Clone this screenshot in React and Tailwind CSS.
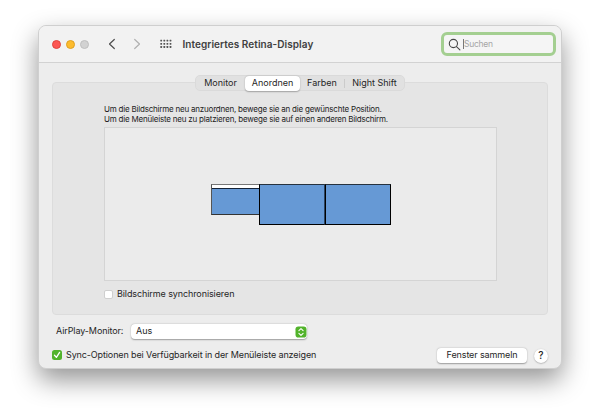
const T = ({ className = "", children }) => (
  <span className={"block whitespace-nowrap " + className}>{children}</span>
);

function TitleBar() {
  return (
    <header className="flex h-[37px] items-center border-b border-[#d2d2d2] bg-[#f2f2f2] pl-[13px] pr-[5px]">
      <div className="flex gap-[4.75px]">
        <i className="size-[9px] rounded-full border-[0.5px] border-[#e0443e] bg-[#fc5753]" />
        <i className="size-[9px] rounded-full border-[0.5px] border-[#dfa023] bg-[#fdbc2e]" />
        <i className="size-[9px] rounded-full border-[0.5px] border-[#bfbfbf] bg-[#d2d2d2]" />
      </div>
      <svg className="ml-[18.5px] h-[12px] w-[9px]" viewBox="0 0 9 12" fill="none" stroke="#4d4d4d" strokeWidth="1.2" strokeLinecap="round" strokeLinejoin="round">
        <path d="M7.3 1.5 2.5 6l4.8 4.5" />
      </svg>
      <svg className="ml-[16px] h-[12px] w-[9px]" viewBox="0 0 9 12" fill="none" stroke="#b0b0b0" strokeWidth="1.2" strokeLinecap="round" strokeLinejoin="round">
        <path d="M2.7 1.5 7.5 6l-4.8 4.5" />
      </svg>
      <svg className="ml-[18.5px] h-[10px] w-[12px]" viewBox="0 0 12 10" fill="#555">
        {[0, 1, 2, 3].map((c) =>
          [0, 1, 2].map((r) => (
            <rect key={`${c}-${r}`} x={0.3 + c * 3.1} y={0.7 + r * 3.2} width="1.8" height="1.8" rx="0.4" />
          ))
        )}
      </svg>
      <T className="ml-[11px] text-[10px] font-semibold leading-[12px] tracking-[0.06px] text-[#404040]">Integriertes Retina-Display</T>
      <div className="ml-auto flex h-[24px] w-[115px] items-center rounded-[6px] border-3 border-[#a4cf91] bg-[#f5f5f5] pl-[4px]">
        <svg className="size-[13px]" viewBox="0 0 13 13" fill="none" stroke="#484848" strokeWidth="1.1" strokeLinecap="round">
          <circle cx="5.4" cy="5.5" r="4.1" />
          <path d="m8.5 8.6 3.4 3.3" />
        </svg>
        <i className="ml-[2px] h-[10px] w-px bg-[#777]" />
        <T className="text-[8.5px] leading-[12px] tracking-[-0.25px] text-[#a6a6a6]">Suchen</T>
      </div>
    </header>
  );
}

function Tabs() {
  return (
    <div className="mx-auto -mt-[8px] flex h-[16px] w-[210px] items-center rounded-[5px] border border-[#dadada] bg-[#e1e1e1] text-center text-[9px] leading-[14px] text-[#262626]">
      <T className="w-[49px]">Monitor</T>
      <T className="-my-px h-[15px] w-[55px] rounded-[4px] bg-white leading-[14px] shadow-[0_0.5px_1.5px_rgba(0,0,0,0.3)]">Anordnen</T>
      <T className="w-[44px]">Farben</T>
      <i className="h-[9px] w-px bg-[#cbcbcb]" />
      <T className="w-[59px]">Night Shift</T>
    </div>
  );
}

function Displays() {
  return (
    <div className="flex h-[154px] w-[393px] items-start border border-[#d4d4d4] bg-[#ebebeb] pl-[106px] pt-[56px]">
      <div className="h-[31px] w-[48px] border border-r-0 border-[#333] border-l-[#555] border-t-[#777] bg-[#6699d5]">
        <div className="h-[4px] border-b border-[#142236] bg-white" />
      </div>
      <div className="h-[41px] w-[66px] border border-black border-r-[#2b4360] border-t-[#26323f] bg-[#6699d5]" />
      <div className="h-[41px] w-[66px] border border-black border-t-[#26323f] bg-[#6699d5]" />
    </div>
  );
}

export default function App() {
  return (
    <div className="h-[420px] w-[600px] overflow-hidden bg-white pl-[38px] pt-[25px] font-['Inter','Liberation_Sans',sans-serif]">
      <main className="h-[344px] w-[524px] overflow-hidden rounded-[8px] border border-[#cfcfcf] bg-[#ededed] shadow-[0_11px_26px_rgba(0,0,0,0.42)]">
        <TitleBar />
        <section className="mx-[13px] mt-[19px] h-[233px] rounded-[4px] border border-[#dcdcdc] bg-[#e5e5e5]">
          <Tabs />
          <div className="pl-[51px] pt-[14px]">
            <T className="text-[8px] leading-[9.5px] tracking-[-0.21px] text-[#1c1c1c]">Um die Bildschirme neu anzuordnen, bewege sie an die gewünschte Position.</T>
            <T className="mb-[3px] text-[8px] leading-[9.5px] tracking-[-0.21px] text-[#1c1c1c]">Um die Menüleiste neu zu platzieren, bewege sie auf einen anderen Bildschirm.</T>
            <Displays />
            <div className="mt-[7px] flex items-center">
              <i className="size-[9px] rounded-[2px] border-[0.5px] border-[#cfcfcf] bg-white" />
              <T className="ml-[4px] pb-px text-[9px] leading-[12px] tracking-[-0.1px] text-[#262626]">Bildschirme synchronisieren</T>
            </div>
          </div>
        </section>
        <div className="mt-[9px] flex h-[15px] items-center pl-[17px]">
          <T className="w-[68px] text-[9px] leading-[13px] pb-[2px] tracking-[-0.1px] text-[#262626]">AirPlay-Monitor:</T>
          <div className="ml-[7px] flex h-[15px] w-[176px] items-center justify-between rounded-[4px] bg-white pl-[5px] pr-[0.5px] shadow-[0_0.5px_1.5px_rgba(0,0,0,0.35)]">
            <T className="pb-[2px] text-[9px] leading-[13px] text-[#262626]">Aus</T>
            <svg className="size-[12px]" viewBox="0 0 12 12" fill="none">
              <rect x="0.5" y="0.5" width="11" height="11" rx="2.8" fill="#52b32b" />
              <path d="M3.9 4.7 6 2.7l2.1 2M3.9 7.3 6 9.3l2.1-2" stroke="white" strokeWidth="1.1" strokeLinecap="round" strokeLinejoin="round" />
            </svg>
          </div>
        </div>
        <div className="mt-[9px] flex h-[15px] items-center pl-[13px]">
          <svg className="-mt-px size-[10px]" viewBox="0 0 10 10" fill="none">
            <rect width="10" height="10" rx="2.5" fill="#52b32b" />
            <path d="m2.5 5.3 1.9 2.1 3.2-5" stroke="white" strokeWidth="1.3" strokeLinecap="round" strokeLinejoin="round" />
          </svg>
          <T className="ml-[4px] pb-[2px] text-[9px] leading-[13px] tracking-[-0.12px] text-[#262626]">Sync-Optionen bei Verfügbarkeit in der Menüleiste anzeigen</T>
          <button className="ml-auto h-[15px] w-[90px] rounded-[4px] bg-white pb-[2px] text-[9px] leading-[13px] tracking-[-0.12px] whitespace-nowrap text-[#262626] shadow-[0_0.5px_1.5px_rgba(0,0,0,0.35)]">Fenster sammeln</button>
          <button className="ml-[7px] mr-[13px] size-[14px] rounded-full bg-white pb-px text-[10px] font-medium leading-[13px] text-[#262626] shadow-[0_0.5px_1.5px_rgba(0,0,0,0.35)]">?</button>
        </div>
      </main>
    </div>
  );
}
